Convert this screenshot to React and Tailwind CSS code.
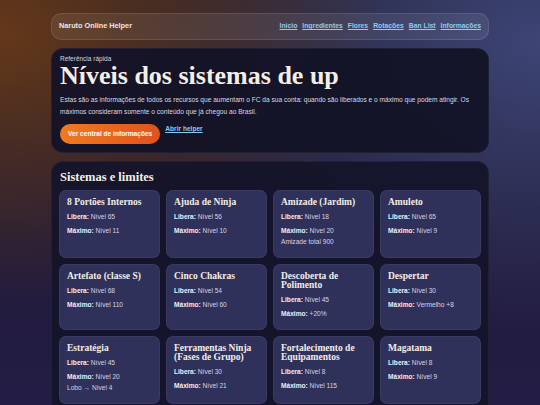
import React from "react";

const links = ["Início", "Ingredientes", "Flores", "Rotações", "Ban List", "Informações"];

const systems = [
  { name: "8 Portões Internos", libera: "Nível 65", maximo: "Nível 11" },
  { name: "Ajuda de Ninja", libera: "Nível 56", maximo: "Nível 10" },
  { name: "Amizade (Jardim)", libera: "Nível 18", maximo: "Nível 20", extra: "Amizade total 900" },
  { name: "Amuleto", libera: "Nível 65", maximo: "Nível 9" },
  { name: "Artefato (classe S)", libera: "Nível 68", maximo: "Nível 110" },
  { name: "Cinco Chakras", libera: "Nível 54", maximo: "Nível 60" },
  { name: "Descoberta de Polimento", libera: "Nível 45", maximo: "+20%" },
  { name: "Despertar", libera: "Nível 30", maximo: "Vermelho +8" },
  { name: "Estratégia", libera: "Nível 45", maximo: "Nível 20", extra: "Lobo → Nível 4" },
  { name: "Ferramentas Ninja (Fases de Grupo)", libera: "Nível 30", maximo: "Nível 21" },
  { name: "Fortalecimento de Equipamentos", libera: "Nível 8", maximo: "Nível 115" },
  { name: "Magatama", libera: "Nível 8", maximo: "Nível 9" },
];

const SystemCard = ({ item }) => (
  <div className="rounded-[7px] bg-[#30315a] border border-white/5 px-[7px] pt-[7px] pb-[10px]">
    <h3 className="font-['Liberation_Serif',serif] font-bold text-[9.5px] leading-[9px] text-[#f1ede6]">
      {item.name}
    </h3>
    <p className="mt-[4px] text-[6.6px] leading-[11px] text-[#d4d4e2]">
      <span className="font-bold text-[#eeeef5]">Libera:</span> {item.libera}
    </p>
    <p className="mt-[3px] text-[6.6px] leading-[11px] text-[#d4d4e2]">
      <span className="font-bold text-[#eeeef5]">Máximo:</span> {item.maximo}
    </p>
    {item.extra && (
      <p className="text-[6.6px] leading-[11px] text-[#d4d4e2]">{item.extra}</p>
    )}
  </div>
);

export default function App() {
  return (
    <div className="min-h-screen font-['Liberation_Sans',Arial,sans-serif] bg-[#1d1934] bg-[radial-gradient(ellipse_at_0%_8%,#643819_0%,rgba(100,56,25,0)_50%),radial-gradient(ellipse_at_100%_10%,#3d4576_0%,rgba(61,69,118,0)_55%),linear-gradient(180deg,#1e1a2b_0%,#231c45_100%)] pt-[13px]">
      <div className="w-[438px] mx-auto flex flex-col gap-[8px]">
        {/* Header */}
        <header className="h-[27px] rounded-[10px] bg-white/[0.08] border border-white/10 flex items-center justify-between px-[7px]">
          <span className="text-[7.3px] font-bold text-[#ece6e0]">Naruto Online Helper</span>
          <nav className="flex gap-[5px]">
            {links.map((l) => (
              <a key={l} href="#" className="text-[6.8px] font-bold text-[#8ccbee] underline">
                {l}
              </a>
            ))}
          </nav>
        </header>

        {/* Hero */}
        <section className="rounded-[12px] bg-[#131327]/95 border border-white/5 px-[8px] pt-[6px] pb-[8px]">
          <p className="text-[6.5px] leading-[8px] text-[#d6d4dc]">Referência rápida</p>
          <h1 className="font-['Liberation_Serif',serif] font-bold text-[26px] leading-[26px] text-[#f4efe6]">
            Níveis dos sistemas de up
          </h1>
          <p className="mt-[5px] text-[6.6px] leading-[12px] text-[#d9d8e2]">
            Estas são as informações de todos os recursos que aumentam o FC da sua conta: quando são liberados e o máximo que podem atingir. Os máximos consideram somente o conteúdo que já chegou ao Brasil.
          </p>
          <div className="mt-[6px] flex items-start gap-[5px]">
            <button className="h-[20px] px-[8px] rounded-full bg-gradient-to-r from-[#f07a22] to-[#e0521c] text-white font-bold text-[6.6px]">
              Ver central de informações
            </button>
            <a href="#" className="text-[6.6px] font-bold text-[#8ccbee] underline leading-[9px]">
              Abrir helper
            </a>
          </div>
        </section>

        {/* Systems */}
        <section className="rounded-[12px] bg-[#141429]/95 border border-white/5 px-[7px] pt-[8px] pb-[10px]">
          <h2 className="font-['Liberation_Serif',serif] font-bold text-[12.5px] leading-[14px] pl-[1px] text-[#f4efe6]">
            Sistemas e limites
          </h2>
          <div className="mt-[6px] grid grid-cols-4 gap-[6px]">
            {systems.map((s) => (
              <SystemCard key={s.name} item={s} />
            ))}
          </div>
        </section>
      </div>
    </div>
  );
}
